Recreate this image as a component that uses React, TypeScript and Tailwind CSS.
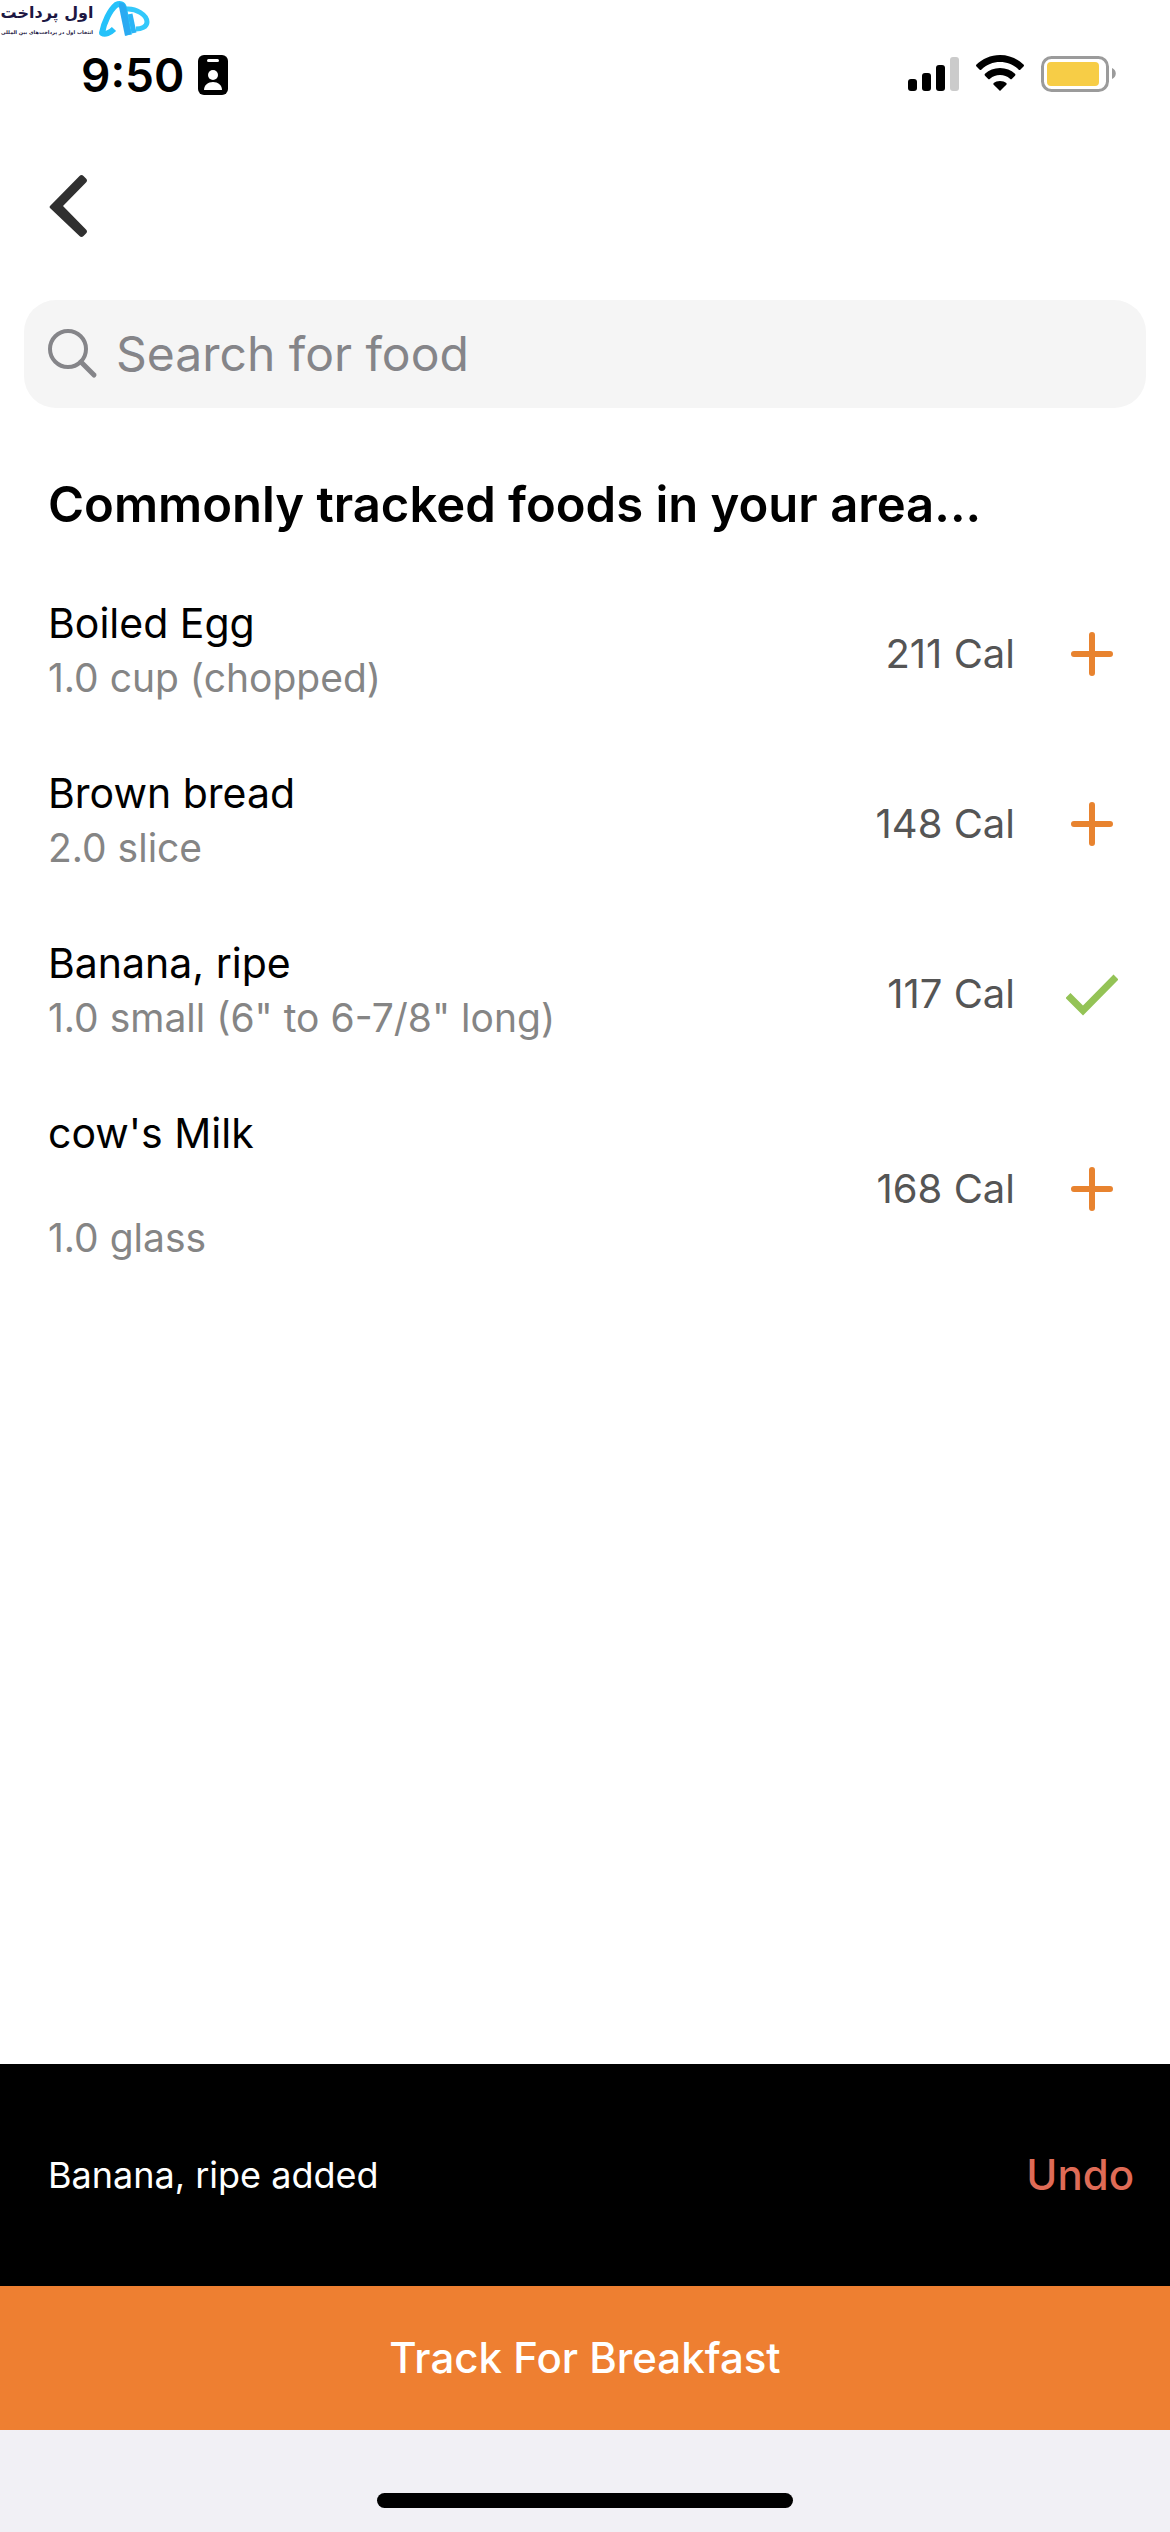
import { useState } from 'react'

interface Food {
  name: string
  serving: string
  calories: number
}

const FOODS: Food[] = [
  { name: 'Boiled Egg', serving: '1.0 cup (chopped)', calories: 211 },
  { name: 'Brown bread', serving: '2.0 slice', calories: 148 },
  { name: 'Banana, ripe', serving: '1.0 small (6" to 6-7/8" long)', calories: 117 },
  // this entry comes with a trailing line break in its name
  { name: "cow's Milk\n\n", serving: '1.0 glass', calories: 168 },
]

function BrandMark() {
  return (
    <div className="absolute top-0 left-0 flex items-start gap-1 text-[#1d1742]">
      <div dir="rtl" className="flex w-[94px] flex-col items-center font-['DejaVu_Sans',sans-serif] whitespace-nowrap">
        <span className="text-[16px] leading-[26px] font-bold">اول پرداخت</span>
        <span className="text-[5px] leading-[12px] font-bold">انتخاب اول در پرداخت‌های بین المللی</span>
      </div>
      <svg width="54" height="38" viewBox="0 0 54 38" fill="none" strokeLinejoin="round" aria-hidden="true">
        <path d="M28 9c10-1 21 6 21 13 0 5-6 7-11 7" stroke="#33c8fb" strokeWidth="5" />
        <path d="M32 14l4 19" stroke="#2bb4f6" strokeWidth="5" />
        <path d="M16 29c-4 4-9 6-12 4C6 22 12 10 18 5c4-2 7-1 8 3l5 27" stroke="#25c2fa" strokeWidth="6" />
        <path d="M21 3c3-1 6 0 7 4l5 27-6 2-6-29z" fill="#2aaaf2" />
      </svg>
    </div>
  )
}

function StatusBar() {
  return (
    <div className="flex h-[150px] items-center justify-between pr-[54px] pl-[81px]">
      <div className="flex items-center gap-3.5">
        <span className="text-[46px] leading-[56px] font-semibold">9:50</span>
        <svg width="30" height="40" viewBox="0 0 30 40" aria-hidden="true">
          <rect width="30" height="40" rx="6" fill="#000" />
          <rect x="9" y="4" width="12" height="3" rx="1.5" fill="#fff" />
          <circle cx="15" cy="20" r="5" fill="#fff" />
          <path d="M6 35c0-5 4-8 9-8s9 3 9 8z" fill="#fff" />
        </svg>
      </div>
      <div className="flex items-center">
        <svg width="208" height="40" viewBox="0 0 208 40" aria-hidden="true">
          <rect x="0" y="24" width="9" height="12" rx="3" />
          <rect x="14" y="18" width="9" height="18" rx="3" />
          <rect x="28" y="10" width="9" height="26" rx="3" />
          <rect x="42" y="2" width="9" height="34" rx="3" fill="#cbcbcb" />
          <path d="M92 0c9.500 0 17.500 4 23.500 9.500q1 1 0 2l-3 3q-1 1-2 0C105.500 9.500 99 7 92 7s-13.500 2.500-18.500 7.500q-1 1-2 0l-3-3q-1-1 0-2C74.500 4 82.500 0 92 0z" />
          <path d="M92 13c6 0 11 2.200 15 5.800q1 1 0 2l-3 3q-1 1-2 0C99 21.200 96 20 92 20s-7 1.200-10 3.800q-1 1-2 0l-3-3q-1-1 0-2C81 15.200 86 13 92 13z" />
          <path d="M92 26c2.600 0 4.800.8 6.300 2q.9.900 0 1.800L92 36l-6.300-6.200q-.9-.9 0-1.800c1.500-1.200 3.700-2 6.300-2z" />
          <rect x="134.500" y="2.500" width="65" height="33" rx="9" fill="#fff" stroke="#9b9b9b" strokeWidth="3" />
          <rect x="139" y="7" width="52" height="24" rx="4" fill="#f7cd46" />
          <path d="M204 13c5 2 5 9 0 11z" fill="#9b9b9b" />
        </svg>
      </div>
    </div>
  )
}

function PlusIcon() {
  return (
    <svg width="52" height="52" viewBox="0 0 52 52" fill="none" stroke="#e8832f" strokeWidth="6" strokeLinecap="round" aria-hidden="true">
      <path d="M26 7v38M8 26h36" />
    </svg>
  )
}

function CheckIcon() {
  return (
    <svg width="52" height="52" viewBox="0 0 52 52" fill="none" stroke="#94c356" strokeWidth="7" aria-hidden="true">
      <path d="M2 27.500l15 15L50 9" />
    </svg>
  )
}

export default function App() {
  const [query, setQuery] = useState('')
  const [added, setAdded] = useState('Banana, ripe')

  return (
    <div className="relative flex min-h-screen flex-col bg-white font-['Inter',sans-serif] text-black">
      <BrandMark />
      <StatusBar />

      <header className="flex h-[150px] items-start px-12 pt-6">
        <button type="button" aria-label="Back" className="flex">
          <svg width="42" height="66" viewBox="0 0 42 66" fill="#303030" aria-hidden="true">
            <path d="M2 32L31.500 2q2-2 4 0l2.500 2.500q2 2 0 4L15 32l23 23.500q2 2 0 4L35.500 62q-2 2-4 0L2 34q-1-1 0-2z" />
          </svg>
        </button>
      </header>

      <main className="flex flex-col">
        <label className="mx-6 flex h-[108px] items-center gap-[18px] rounded-[32px] bg-[#f5f5f5] px-6">
          <svg width="50" height="50" viewBox="0 0 50 50" fill="none" stroke="#858589" aria-hidden="true">
            <circle cx="20" cy="20" r="18" strokeWidth="4" />
            <path d="M33 33l13 13" strokeWidth="5" strokeLinecap="round" />
          </svg>
          <input
            type="text"
            aria-label="Search for food"
            placeholder="Search for food"
            value={query}
            onChange={(e) => setQuery(e.target.value)}
            className="min-w-0 flex-1 bg-transparent text-[48px] leading-[60px] outline-none placeholder:text-[#858589]"
          />
        </label>

        <h1 className="px-12 pt-[66px] pb-[30px] text-[49px] leading-[62px] font-semibold">
          Commonly tracked foods in your area...
        </h1>

        <ul>
          {FOODS.map((food) => {
            const name = food.name.trim()
            const isAdded = name === added
            return (
              <li key={name} className="flex items-center gap-12 pt-8 pr-[52px] pb-[34px] pl-12">
                <div className="flex min-w-0 flex-1 flex-col gap-1.5">
                  <span className="text-[41px] leading-[50px] whitespace-pre-line">{food.name}</span>
                  <span className="text-[39px] leading-[48px] text-[#858585]">{food.serving}</span>
                </div>
                <div className="flex items-center gap-[51px] pt-2">
                  <span className="text-[40px] leading-[50px] text-[#555555]">{food.calories} Cal</span>
                  <button
                    type="button"
                    aria-label={isAdded ? `Remove ${name}` : `Add ${name}`}
                    onClick={() => setAdded(isAdded ? '' : name)}
                  >
                    {isAdded ? <CheckIcon /> : <PlusIcon />}
                  </button>
                </div>
              </li>
            )
          })}
        </ul>
      </main>

      <footer className="mt-auto flex flex-col">
        {added && (
          <div className="flex h-[222px] items-center justify-between bg-black pr-9 pl-12">
            <span className="text-[36px] leading-[48px] text-white">{added} added</span>
            <button type="button" onClick={() => setAdded('')} className="text-[42px] leading-[50px] font-medium text-[#df6b56]">
              Undo
            </button>
          </div>
        )}
        <button type="button" className="h-36 bg-[#ee7f31] text-[42px] leading-[50px] font-medium text-white">
          Track For Breakfast
        </button>
        <div className="flex h-[102px] items-end justify-center bg-[#f1f0f5] pb-6">
          <div className="h-[15px] w-[416px] rounded-full bg-black" />
        </div>
      </footer>
    </div>
  )
}
